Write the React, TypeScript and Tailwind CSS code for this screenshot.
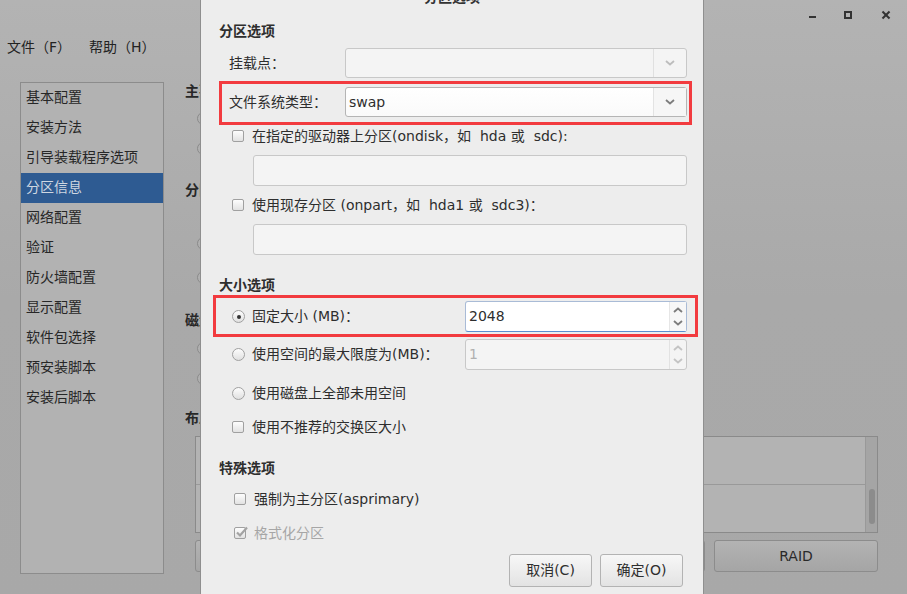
import React from "react";

const Chevron = ({ up = false, color = "#7a7a7a" }: { up?: boolean; color?: string }) => (
  <svg width="10" height="6" viewBox="0 0 10 6" className="block">
    <path d={up ? "M1 5 L5 1.5 L9 5" : "M1 1 L5 4.5 L9 1"} fill="none" stroke={color} strokeWidth="1.8" />
  </svg>
);

const Check = ({ checked = false, disabled = false }: { checked?: boolean; disabled?: boolean }) => (
  <div className="relative w-[12px] h-[12px] shrink-0 rounded-[2px] border border-[#a0a0a0] bg-gradient-to-b from-[#fdfdfd] to-[#e2e2e2]">
    {checked && (
      <svg width="14" height="12" viewBox="0 0 14 12" className="absolute left-[0px] top-[-2px]">
        <path d="M2 6.5 L5 9.5 L12 1.5" fill="none" stroke={disabled ? "#a3a3a3" : "#333"} strokeWidth="2.2" />
      </svg>
    )}
  </div>
);

const Radio = ({ on = false }: { on?: boolean }) => (
  <div className="w-[13px] h-[13px] shrink-0 rounded-full border border-[#a0a0a0] bg-gradient-to-b from-[#fdfdfd] to-[#e0e0e0] flex items-center justify-center">
    {on && <div className="w-[4px] h-[4px] rounded-full bg-[#333]" />}
  </div>
);

const Combo = ({ value, disabled = false }: { value?: string; disabled?: boolean }) => (
  <div
    className={
      "w-[342px] h-[30px] flex rounded-[3px] border " +
      (disabled ? "border-[#c8c8c8] bg-[#f4f4f4]" : "border-[#b5b5b5] bg-gradient-to-b from-white to-[#fafafa]")
    }
  >
    <div className="flex-1 flex items-center pl-[3px] text-[#2e2e2e]">{value}</div>
    <div className={"w-[33px] flex items-center justify-center border-l " + (disabled ? "border-[#e0e0e0]" : "border-[#e3e3e3] bg-[#f6f6f6]")}>
      <Chevron color={disabled ? "#bdbdbd" : "#7c7c7c"} />
    </div>
  </div>
);

const Spin = ({ value, disabled = false }: { value: string; disabled?: boolean }) => (
  <div
    className={
      "w-[222px] h-[31px] flex rounded-[3px] border " +
      (disabled ? "border-[#c8c8c8] bg-[#f4f4f4]" : "border-[#a9bbd6] border-b-[#5a8fd0] bg-white")
    }
  >
    <div className={"flex-1 flex items-center pl-[3px] " + (disabled ? "text-[#b0b0b0]" : "text-[#2e2e2e]")}>{value}</div>
    <div className={"w-[17px] flex flex-col items-center justify-center gap-[7px] border-l " + (disabled ? "border-[#e2e2e2]" : "border-[#e6e6e6] bg-[#f7f7f7]")}>
      <Chevron up color={disabled ? "#c4c4c4" : "#7c7c7c"} />
      <Chevron color={disabled ? "#c4c4c4" : "#7c7c7c"} />
    </div>
  </div>
);

const Field = () => <div className="ml-[52px] w-[434px] h-[31px] rounded-[3px] border border-[#c8c8c8] bg-[#f4f4f4]" />;

const Btn = ({ label }: { label: string }) => (
  <div className="w-[83px] h-[33px] flex items-center justify-center rounded-[3px] border border-[#b3b3b3] bg-gradient-to-b from-[#f7f7f7] to-[#e3e3e3] text-[#2e2e2e]">
    {label}
  </div>
);

const sideItems = ["基本配置", "安装方法", "引导装载程序选项", "分区信息", "网络配置", "验证", "防火墙配置", "显示配置", "软件包选择", "预安装脚本", "安装后脚本"];

const BgRadio = () => (
  <div className="h-[30px] flex items-center pl-[12px]">
    <div className="w-[13px] h-[13px] rounded-full border border-[#8a8a8a] bg-[#b0b0b0]" />
  </div>
);

export default function App() {
  return (
    <div className="relative w-[907px] h-[594px] overflow-hidden bg-[#a8a8a8] text-[14px] text-[#272727] font-['DejaVu_Sans','Noto_Sans_CJK_SC',sans-serif]">
      {/* background window */}
      <div className="flex flex-col h-full bg-gradient-to-b from-[#b3b3b3] via-[#a9a9a9] to-[#a8a8a8]">
        <div className="h-[30px] flex items-center justify-end pr-[17px]">
          <div className="w-[7px] h-[2px] bg-[#333] mt-[4px]" />
          <div className="ml-[28px] w-[8px] h-[8px] border-[2px] border-[#333]" />
          <div className="ml-[30px] relative w-[8px] h-[8px]">
            <div className="absolute left-[-1px] top-[3px] w-[10px] h-[2px] bg-[#333] rotate-45" />
            <div className="absolute left-[-1px] top-[3px] w-[10px] h-[2px] bg-[#333] -rotate-45" />
          </div>
        </div>
        <div className="h-[34px] flex items-center pl-[7px] text-[#222]">
          <span>文件（F）</span>
          <span className="ml-[18px]">帮助（H）</span>
        </div>
        <div className="mt-[18px] flex">
          <div className="ml-[20px] w-[144px] h-[492px] border border-[#8c8c8c] bg-[#b2b2b2] flex flex-col">
            {sideItems.map((s) => (
              <div
                key={s}
                className={
                  "h-[30px] shrink-0 flex items-center pl-[5px] pb-[2px] " +
                  (s === "分区信息" ? "bg-[#2e5b92] text-[#cfd7e1]" : "text-[#272727]")
                }
              >
                {s}
              </div>
            ))}
          </div>
          <div className="ml-[21px] w-[693px] flex flex-col font-bold">
            <div className="h-[18px] leading-[18px]">主要</div>
            <div className="mt-[3px]">
              <BgRadio />
              <BgRadio />
            </div>
            <div className="mt-[18px] h-[18px] leading-[18px]">分区</div>
            <div className="mt-[29px]">
              <BgRadio />
              <div className="mt-[4px]">
                <BgRadio />
              </div>
            </div>
            <div className="mt-[19px] h-[18px] leading-[18px]">磁盘</div>
            <div className="mt-[4px]">
              <BgRadio />
              <BgRadio />
            </div>
            <div className="mt-[16px] h-[18px] leading-[18px]">布局</div>
            <div className="mt-[9px] ml-[10px] w-[683px] h-[97px] border border-[#8a8a8a] bg-[#b3b3b3] flex">
              <div className="flex-1 flex flex-col">
                <div className="h-[48px] border-b border-[#999]" />
                <div className="flex-1" />
              </div>
              <div className="w-[12px] bg-[#a5a5a5] border-l border-[#999] flex flex-col items-center">
                <div className="mt-[52px] w-[6px] h-[35px] rounded-[3px] bg-[#8c8c8c]" />
              </div>
            </div>
            <div className="mt-[7px] ml-[10px] flex gap-[9px] font-normal">
              <div className="w-[510px] h-[32px] rounded-[3px] border border-[#8c8c8c] bg-gradient-to-b from-[#b3b3b3] to-[#a5a5a5]" />
              <div className="w-[164px] h-[32px] rounded-[3px] border border-[#8c8c8c] bg-gradient-to-b from-[#b3b3b3] to-[#a5a5a5] flex items-center justify-center text-[#2a2a2a]">
                RAID
              </div>
            </div>
          </div>
        </div>
      </div>

      {/* dialog */}
      <div className="absolute left-[200px] top-0 w-[504px] h-[600px] bg-[#ededed] border-x border-[#8f8f8f] flex flex-col text-[#2e2e2e]">
        <div className="-mt-[11px] h-[16px] leading-[16px] text-center font-bold text-[#333]">分区选项</div>

        <div className="mt-[16px] h-[20px] leading-[20px] pl-[18px] font-bold">分区选项</div>

        <div className="mt-[7px] h-[30px] flex items-center pl-[28px]">
          <div className="w-[116px]">挂载点：</div>
          <Combo disabled />
        </div>

        <div className="mt-[3px] ml-[18px] w-[473px] h-[44px] border-[3px] border-[#f23b3f] flex items-start pl-[7px] pt-[3px]">
          <div className="w-[116px] h-[30px] flex items-center">文件系统类型：</div>
          <Combo value="swap" />
        </div>

        <div className="mt-[1px] h-[20px] flex items-center pl-[31px] gap-[8px]">
          <Check />
          <span>在指定的驱动器上分区(ondisk，如&nbsp; hda 或&nbsp; sdc):</span>
        </div>
        <div className="mt-[9px]">
          <Field />
        </div>

        <div className="mt-[9px] h-[20px] flex items-center pl-[31px] gap-[8px]">
          <Check />
          <span>使用现存分区 (onpart，如&nbsp; hda1 或&nbsp; sdc3)：</span>
        </div>
        <div className="mt-[9px]">
          <Field />
        </div>

        <div className="mt-[20px] h-[20px] leading-[20px] pl-[18px] font-bold">大小选项</div>

        <div className="ml-[12px] w-[485px] h-[42px] border-[3px] border-[#f23b3f] flex items-start pl-[16px] pt-[3px]">
          <div className="w-[233px] h-[31px] flex items-center gap-[7px]">
            <Radio on />
            <span>固定大小 (MB)：</span>
          </div>
          <Spin value="2048" />
        </div>

        <div className="mt-[2px] h-[31px] flex items-center pl-[31px]">
          <div className="w-[233px] flex items-center gap-[7px]">
            <Radio />
            <span>使用空间的最大限度为(MB)：</span>
          </div>
          <Spin value="1" disabled />
        </div>

        <div className="mt-[13px] h-[20px] flex items-center pl-[31px] gap-[7px]">
          <Radio />
          <span>使用磁盘上全部未用空间</span>
        </div>

        <div className="mt-[14px] h-[20px] flex items-center pl-[31px] gap-[8px]">
          <Check />
          <span>使用不推荐的交换区大小</span>
        </div>

        <div className="mt-[21px] h-[20px] leading-[20px] pl-[18px] font-bold">特殊选项</div>

        <div className="mt-[11px] h-[20px] flex items-center pl-[33px] gap-[8px]">
          <Check />
          <span>强制为主分区(asprimary)</span>
        </div>

        <div className="mt-[14px] h-[20px] flex items-center pl-[33px] gap-[8px]">
          <Check checked disabled />
          <span className="text-[#a6a6a6]">格式化分区</span>
        </div>

        <div className="mt-[11px] flex justify-end gap-[8px] pr-[20px]">
          <Btn label="取消(C)" />
          <Btn label="确定(O)" />
        </div>
      </div>
    </div>
  );
}
